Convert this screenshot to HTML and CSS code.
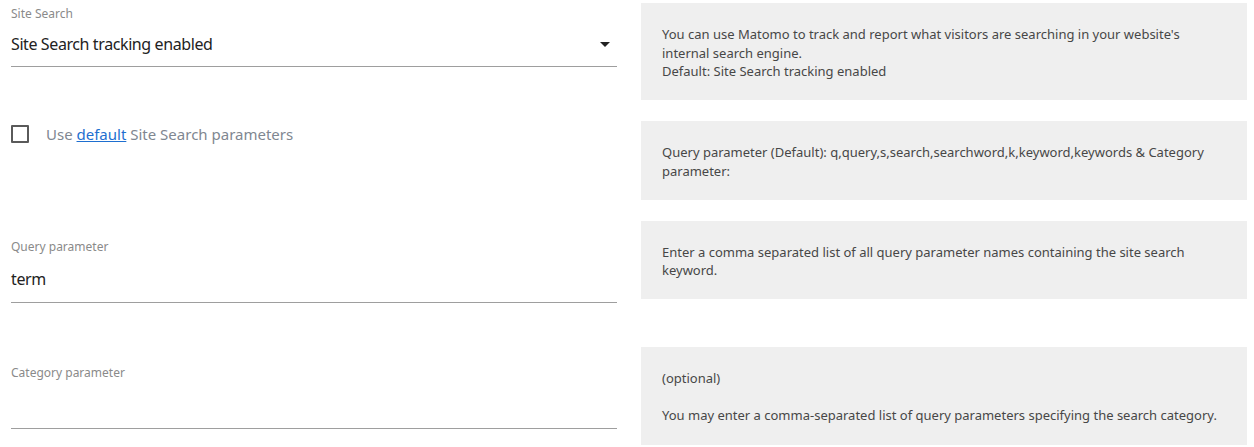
FILE: index.html
```html
<!DOCTYPE html>
<html>
<head>
<meta charset="utf-8">
<link rel="stylesheet" href="styles.css">
</head>
<body>
<div class="form">
  <div class="row row-1">
    <div class="field field-select">
      <label class="field-label">Site Search</label>
      <div class="select">
        <span class="select-value">Site Search tracking enabled</span>
        <span class="caret"></span>
      </div>
    </div>
    <div class="help">You can use Matomo to track and report what visitors are searching in your website's internal search engine.<br>Default: Site Search tracking enabled</div>
  </div>

  <div class="row row-2">
    <div class="field field-check">
      <span class="checkbox"></span>
      <span class="check-label">Use <a href="#" class="link">default</a> Site Search parameters</span>
    </div>
    <div class="help">Query parameter (Default): q,query,s,search,searchword,k,keyword,keywords &amp; Category parameter:</div>
  </div>

  <div class="row row-3">
    <div class="field field-text">
      <label class="field-label">Query parameter</label>
      <div class="input">term</div>
    </div>
    <div class="help">Enter a comma separated list of all query parameter names containing the site search keyword.</div>
  </div>

  <div class="row row-4">
    <div class="field field-text">
      <label class="field-label">Category parameter</label>
      <div class="input"></div>
    </div>
    <div class="help help-tall">(optional)<br><br>You may enter a comma-separated list of query parameters specifying the search category.</div>
  </div>
</div>
</body>
</html>
```

FILE: styles.css
```css
html, body {
  margin: 0;
  padding: 0;
  background: #ffffff;
}

body {
  font-family: "Noto Sans", "Open Sans", "DejaVu Sans", sans-serif;
  color: #222222;
}

.form {
  padding: 3px 7px 0 11px;
  display: flex;
  flex-direction: column;
}

.row {
  display: flex;
  align-items: flex-start;
  gap: 24px;
}

.row-1,
.row-2 {
  margin-bottom: 21px;
}

.row-3 {
  margin-bottom: 44px;
}

.field {
  width: 606px;
  flex: 0 0 606px;
}

.help {
  flex: 0 0 606px;
  width: 606px;
  box-sizing: border-box;
  background: #efefef;
  padding: 22px 21px 19.5px 21px;
  font-size: 13px;
  line-height: 18.5px;
  color: #474747;
}

.help-tall {
  padding-bottom: 20.5px;
}

.field-label {
  display: block;
  font-size: 12px;
  line-height: 16px;
  color: #8a8a8a;
}

.field-select {
  padding-top: 3px;
}

.select {
  height: 45px;
  box-sizing: border-box;
  border-bottom: 1px solid #9e9e9e;
  display: flex;
  align-items: center;
  justify-content: space-between;
  padding-right: 7px;
}

.select-value {
  font-size: 16px;
  letter-spacing: -0.4px;
  color: #222222;
}

.caret {
  width: 0;
  height: 0;
  border-left: 5px solid transparent;
  border-right: 5px solid transparent;
  border-top: 5px solid #222222;
}

.field-text {
  padding-top: 18px;
}

.field-text .field-label {
  margin-bottom: 2px;
}

.input {
  height: 46px;
  box-sizing: border-box;
  border-bottom: 1px solid #9e9e9e;
  line-height: 44px;
  font-size: 16px;
  letter-spacing: -0.4px;
  color: #222222;
}

.field-check {
  display: flex;
  align-items: center;
  gap: 17px;
  padding-top: 3px;
}

.checkbox {
  width: 18px;
  height: 18px;
  box-sizing: border-box;
  border: 2px solid #5a5a5a;
  border-radius: 1px;
  flex: 0 0 18px;
}

.check-label {
  font-size: 15px;
  color: #7f8791;
  line-height: 20px;
}

.link {
  color: #1e6fd0;
  text-decoration: underline;
}
```
